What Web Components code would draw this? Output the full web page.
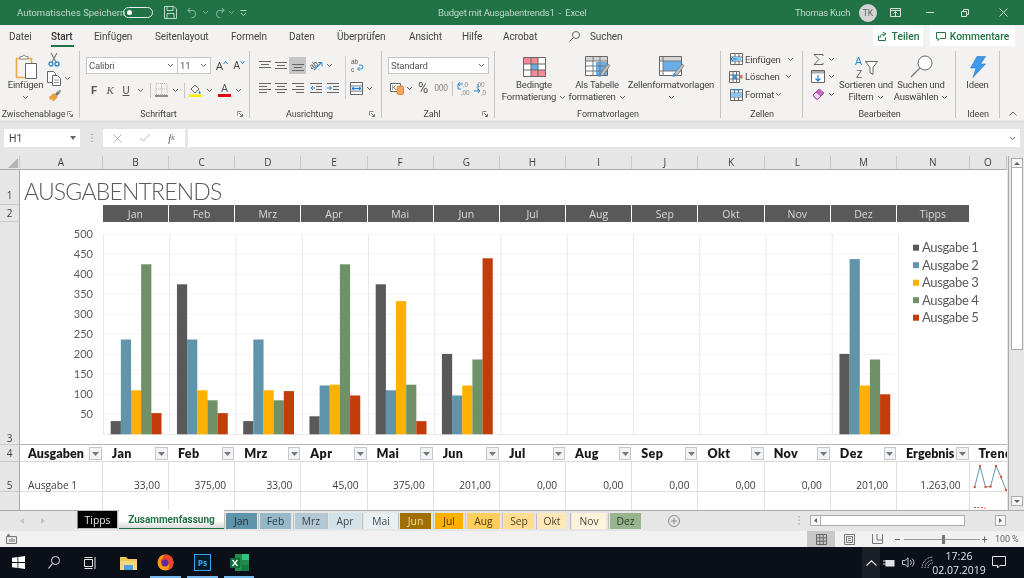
<!DOCTYPE html>
<html lang="de"><head><meta charset="utf-8"><title>Budget mit Ausgabentrends1 - Excel</title>
<style>
html,body{margin:0;padding:0;width:1024px;height:578px;overflow:hidden;background:#e6e6e6}
body{display:flex;flex-direction:column;font-family:Roboto,"Open Sans",sans-serif;filter:blur(.3px)}
</style></head><body>
<xl-titlebar></xl-titlebar>
<xl-tabs></xl-tabs>
<xl-ribbon></xl-ribbon>
<xl-formula></xl-formula>
<xl-sheet></xl-sheet>
<xl-sheettabs></xl-sheettabs>
<xl-status></xl-status>
<xl-taskbar></xl-taskbar>
<script>
const S=(w,h,b,extra='')=>`<svg width="${w}" height="${h}" viewBox="0 0 ${w} ${h}" fill="none" style="overflow:visible" ${extra}>${b}</svg>`;
const L=(c,arr)=>arr.map(a=>`<path d="M${a[0]} ${a[2]+.5}H${a[1]}" stroke="${c}"/>`).join('');
const chev=(c='#666')=>S(7,5,`<path d="M1 1l2.5 2.5L6 1" stroke="${c}"/>`);
const gridIcon=(w,h,body='')=>`<path d="M.5 .5H${w-.5}V${h-.5}H.5z" stroke="#666" fill="#fff"/>`+body;
const LS='font-family="Liberation Sans"';
const I={
 paste:S(22,25,`<path d="M1.5 4.5h15v19h-15z" stroke="#eba94a" stroke-width="1.6" fill="#f7f4ef"/><path d="M5 5V2.5h2.5a1.5 1.5 0 0 1 3 0H13V5z" stroke="#8a8a8a" fill="#fff"/><path d="M10.5 9.5h11v15h-11z" stroke="#666" fill="#fff"/>`),
 cut:S(12,15,`<path d="M3 1l5 9M9 1L4 10" stroke="#777" stroke-width="1.1"/><circle cx="3" cy="12" r="2" stroke="#2f8ad6" stroke-width="1.3"/><circle cx="9" cy="12" r="2" stroke="#2f8ad6" stroke-width="1.3"/>`),
 copy:S(14,15,`<path d="M.5 .5h6l2 2v9H.5z" stroke="#666" fill="#fff"/><path d="M5.5 4.5h5l3 3v7h-8z" stroke="#666" fill="#fff"/><path d="M7 9h5M7 11.500h5" stroke="#999"/>`),
 brush:S(14,13,`<path d="M1 8l5-4 4 4-4 4H4l1-2-3 1z" fill="#e9a13b"/><path d="M7 5l3-3 2 2-3 3z" fill="#777"/><path d="M10 2l2-1.500 1 1.500-1 2z" fill="#999"/>`),
 grow:S(5,3,`<path d="M.5 3L2.500 .5 4.500 3" stroke="#2f8ad6"/>`),
 shrink:S(5,3,`<path d="M.5 0L2.500 2.500 4.500 0" stroke="#2f8ad6"/>`),
 borders:S(13,14,`<path d="M1 .5h11v11H1zM1 6h11M6.500 .5v11" stroke="#bbb" stroke-dasharray="1 1"/><path d="M0 13h13" stroke="#555" stroke-width="1.300"/>`),
 fill:S(14,14,`<path d="M2 6l4-4 4 4-4 4z" stroke="#666" fill="#fff"/><path d="M10 7c1 2 2 2 1.500 3.500s-2.500 .5-1.500-3.500z" fill="#2f8ad6"/><rect y="11.500" width="13" height="2.500" fill="#ffec00"/>`),
 lTop:S(12,10,L('#666',[[0,12,0],[2,10,3],[0,12,6]])),
 lMid:S(12,12,L('#666',[[0,12,2],[2,10,5],[0,12,8]])),
 lBot:S(12,12,L('#666',[[0,12,4],[2,10,7],[0,12,10]])),
 orient:S(14,13,`<g transform="rotate(-35 4 6)"><text x="0" y="9" font-size="8" fill="#555" ${LS}>ab</text></g><path d="M5 11L12 4" stroke="#2f8ad6" stroke-width="1.300"/><path d="M9 3.500h4v4" stroke="#2f8ad6"/>`),
 aL:S(12,11,L('#666',[[0,12,0],[0,8,3],[0,12,6],[0,8,9]])),
 aC:S(12,11,L('#666',[[0,12,0],[2,10,3],[0,12,6],[2,10,9]])),
 aR:S(12,11,L('#666',[[0,12,0],[4,12,3],[0,12,6],[4,12,9]])),
 indL:S(12,11,L('#666',[[0,12,0],[6,12,3],[6,12,6],[0,12,9]])+`<path d="M5 5H.500M3 3L1 5l2 2" stroke="#2f8ad6"/>`),
 indR:S(12,11,L('#666',[[0,12,0],[6,12,3],[6,12,6],[0,12,9]])+`<path d="M0 5h4.500M2.500 3l2 2-2 2" stroke="#2f8ad6"/>`),
 wrap:S(13,15,`<text x="0" y="6" font-size="6.500" fill="#555" ${LS}>ab</text><text x="0" y="13.800" font-size="6.500" fill="#555" ${LS}>c</text><path d="M7 11h3a2 2 0 0 0 0-4H8M8.500 9l-2 2 2 2" stroke="#2f8ad6"/>`),
 merge:S(13,13,`<path d="M.5 .5h12v12H.5zM.5 4h12M.5 9h12" stroke="#666" fill="#fff"/><rect x="1" y="4.500" width="11" height="4" fill="#cfe5f7"/><path d="M2 6.500h9M4 5L2 6.500 4 8M9 5l2 1.500L9 8" stroke="#1f7fd0"/>`),
 cur:S(14,13,`<path d="M.5 1.500h10v8H.5z" stroke="#666" fill="#fff"/><text x="2" y="8" font-size="6.500" fill="#555" ${LS}>K</text><rect x="7" y="4" width="6.500" height="8.500" rx="1.500" fill="#f2a65a" stroke="#d98a3a"/>`),
 d1:S(13,15,`<text x="6" y="6" font-size="6.500" fill="#888" ${LS}>,0</text><text x="4" y="13.800" font-size="6.500" fill="#888" ${LS}>,00</text><path d="M6 3H1M3 1L1 3l2 2M1 3v5h3" stroke="#2f8ad6"/>`),
 d2:S(13,15,`<text x="2" y="6" font-size="6.500" fill="#888" ${LS}>,00</text><text x="7" y="13.800" font-size="6.500" fill="#888" ${LS}>,0</text><path d="M0 10h6M4 8l2 2-2 2M4 3v7" stroke="#2f8ad6"/>`),
 cond:S(23,20,gridIcon(23,20,`<rect x="1" y="1" width="14" height="6" fill="#f58a94"/><rect x="8" y="7" width="7" height="6" fill="#6aaee8"/><rect x="8" y="13" width="14" height="6" fill="#f58a94"/><path d="M8 1v18M15 1v18M1 7h21M1 13h21" stroke="#666"/>`)),
 tbl:S(25,22,`<path d="M.5 .5H22.500V19.500H.5z" stroke="#666" fill="#fff"/><rect x="1" y="1" width="21" height="4" fill="#d5d5d5"/><rect x="11" y="6" width="11" height="13" fill="#6aaee8"/><path d="M8 1v18M15 1v18M1 5h21M1 10h21M1 15h21" stroke="#777"/><path d="M15 18l8-10 2 1.500L18 20z" fill="#bcbcbc" stroke="#666" stroke-width=".6"/><path d="M13 20l2-3 2 2-2 2z" fill="#3f8fd6"/>`),
 sty:S(25,22,`<path d="M.5 .5H22.500V19.500H.5z" stroke="#666" fill="#fff"/><rect x="1" y="1" width="21" height="4" fill="#d5d5d5"/><rect x="4" y="5" width="18" height="10" fill="#6aaee8"/><path d="M1 5h21M4 1v18M1 15h21" stroke="#777"/><path d="M15 18l8-10 2 1.500L18 20z" fill="#bcbcbc" stroke="#666" stroke-width=".6"/><path d="M13 20l2-3 2 2-2 2z" fill="#3f8fd6"/>`),
 cIns:S(13,12,`<path d="M.5 .5h12v11H.5zM.5 4h12M.5 8h12M5 .5v11M9 .5v11" stroke="#666" fill="#fff"/><rect x="3" y="4" width="8" height="4" fill="#8cc4f2"/><path d="M7 6H1M3 4L1 6l2 2" stroke="#1f7fd0"/>`),
 cDel:S(14,12,`<path d="M.5 .5h10v11H.5zM.5 4h10M.5 8h10M4 .5v11M7.500 .5v11" stroke="#666" fill="#fff"/><rect x="4" y="4" width="4" height="4" fill="#3f8fd6"/><path d="M10 4l3.500 3.500M13.500 4L10 7.500" stroke="#e2504a" stroke-width="1.200"/>`),
 cFmt:S(13,13,`<path d="M.5 1.500h12v11H.5zM.5 5h12M.5 9h12M4.500 1.500v11M8.500 1.500v11" stroke="#666" fill="#fff"/><rect x="2" y="1" width="9" height="1.500" fill="#2f8ad6"/><rect x="1" y="5" width="11" height="4" fill="#8cc4f2"/>`),
 sigma:S(11,11,`<path d="M10 2V.5H1L6 5.500 1 10.500h9V9" stroke="#666"/>`),
 fillD:S(14,13,`<path d="M.5 .5h13v12H.5z" stroke="#666" fill="#fff"/><rect x="1" y="1" width="12" height="2.500" fill="#aaa"/><path d="M7 5v6M4.500 8.500L7 11l2.500-2.500" stroke="#1f7fd0" stroke-width="1.200"/>`),
 eraser:S(13,12,`<path d="M1 7l6-6 5 4-6 6H4z" fill="#c86dc0" stroke="#a64fa0"/><path d="M1 7l3-3 5 4-3 3H4z" fill="#f3d6f0" stroke="#a64fa0"/>`),
 sort:S(23,24,`<text x="0" y="10" font-size="10.500" fill="#2f8ad6" ${LS}>A</text><text x="1" y="22.500" font-size="10.500" fill="#666" ${LS}>Z</text><path d="M10.500 6.500h12l-4.500 6v7l-3-2v-5z" stroke="#666" fill="#fff"/>`),
 find:S(23,23,`<circle cx="15" cy="8" r="7" stroke="#666" fill="#fff"/><path d="M10 13L1 22" stroke="#777" stroke-width="1.300"/>`),
 bolt:S(16,22,`<path d="M7 .5h8.500L10.500 8h5L3 21.500 6 12H.5z" fill="#3f9be8" stroke="#1f77c9" stroke-width=".6"/>`),
 launch:S(6,6,`<path d="M.5 .5h4M.5 .5v4" stroke="#888"/><path d="M2 2l3.500 3.500M5.500 3v2.500H3" stroke="#777"/>`)
};
class Base extends HTMLElement{
 connectedCallback(){ if(this.shadowRoot) return; const r=this.attachShadow({mode:'open'}); r.innerHTML=`<style>${this.css()}</style>${this.html()}`; }
 css(){return ''} html(){return ''}
}
customElements.define('xl-titlebar',class extends Base{
 css(){return `:host{display:flex;align-items:center;height:25px;flex:none;background:#217346;color:#bcd7c8;font-size:9.500px;position:relative}
 .c{display:flex;align-items:center;justify-content:center;flex:none}
 .tg{width:29px;height:11px;border:1px solid #e8f1ec;border-radius:7px;box-sizing:border-box;margin-left:5px;display:flex;align-items:center;padding-left:3px;margin-right:11px;width:30px}
 .tg i{width:5px;height:5px;border-radius:50%;background:#fff}
 .av{width:18px;height:18px;border-radius:50%;background:#d4d4d4;color:#666;font-size:8.500px;letter-spacing:0}
 .t{width:148px;margin-left:191px;white-space:pre;font-size:9.500px;letter-spacing:-.25px}`}
 html(){return `<span style="margin-left:17px;width:101px;white-space:nowrap">Automatisches Speichern</span>
 <span class="tg"><i></i></span>
 <span class="c">${S(13,13,`<path d="M.5 .5H10l2.500 2.500V12.500H.5z" stroke="#bcd7c8"/><path d="M3 .5v4h6v-4M3 12.500V7.500h7v5" stroke="#bcd7c8"/>`)}</span>
 <span class="c" style="margin-left:10px">${S(12,11,`<path d="M3 1L1 3.500 3.500 5.500M1.500 3.500h5a4 4 0 0 1 0 7h-2" stroke="#7fae95" stroke-width="1.200"/>`)}</span>
 <span class="c" style="margin-left:3px">${chev('#7fae95')}</span>
 <span class="c" style="margin-left:4px">${S(12,11,`<path d="M9 1l2 2.500L8.500 5.500M10.500 3.500h-5a4 4 0 0 0 0 7h2" stroke="#7fae95" stroke-width="1.200"/>`)}</span>
 <span class="c" style="margin-left:3px">${chev('#7fae95')}</span>
 <span class="c" style="margin-left:5px">${S(7,6,`<path d="M.5 .5h6M1 3l2.500 2.500L6 3" stroke="#bcd7c8"/>`)}</span>
 <span class="t">Budget mit Ausgabentrends1  -  Excel</span>
 <span style="margin-left:209px;width:55px;white-space:nowrap;font-size:9.500px;letter-spacing:-.3px">Thomas Kuch</span>
 <span class="c av" style="margin-left:9px">TK</span>
 <span class="c" style="margin-left:13px">${S(11,9,`<path d="M.5 .5h10v8H.5zM.5 2.500h10M5.500 4v4M3.500 5.500L5.500 3.500l2 2" stroke="#d5e5dc"/>`)}</span>
 <span class="c" style="margin-left:25px">${S(8,1,`<path d="M0 .5h8" stroke="#d5e5dc"/>`)}</span>
 <span class="c" style="margin-left:27px">${S(8,8,`<path d="M.5 2.500h5v5h-5zM2.500 2V.5h5v5H6" stroke="#d5e5dc"/>`)}</span>
 <span class="c" style="margin-left:30px">${S(9,9,`<path d="M.5 .5l8 8M8.500 .5l-8 8" stroke="#d5e5dc"/>`)}</span>`}
});
customElements.define('xl-tabs',class extends Base{
 css(){return `:host{display:flex;height:23px;flex:none;background:#f3f2f1;color:#444;font-size:10px;letter-spacing:-.1px;align-items:center}
 span{flex:none;white-space:nowrap;line-height:23px;height:23px}
 .a{font-weight:500;color:#333;position:relative;box-sizing:border-box}
 .a i{position:absolute;left:0;right:0;top:20px;height:1.500px;background:#217346}
 .b{height:20px;line-height:19px;background:#fff;color:#217346;font-weight:500;display:flex;align-items:center;justify-content:center;gap:4px;margin-top:-1px;font-size:10.300px;letter-spacing:0}`}
 html(){const t=[['Datei',9,23],['Start',51,23],['Einfügen',94,38],['Seitenlayout',155,54],['Formeln',231,36],['Daten',289,26],['Überprüfen',337,51],['Ansicht',409,32],['Hilfe',462,20],['Acrobat',503,36]];
 let x=0,o='';for(const[n,l,w]of t){o+=`<span class="${n=='Start'?'a':''}" style="margin-left:${l-x}px;width:${w}px">${n}${n=='Start'?'<i></i>':''}</span>`;x=l+w}
 return o+`<span style="margin-left:30px;width:11px;display:flex;align-items:center">${S(11,11,`<circle cx="7" cy="4" r="3.500" stroke="#666"/><path d="M4.500 6.500L.5 10.500" stroke="#666"/>`)}</span>
 <span style="margin-left:10px;width:283px">Suchen</span>
 <span class="b" style="width:50px">${S(11,10,`<path d="M1.500 4.500v5h7v-3M3 7c0-3 2-4 4.500-4M6 1l3 2-3 2" stroke="#217346"/>`)}Teilen</span>
 <span class="b" style="width:85px;margin-left:7px">${S(10,9,`<path d="M.5 .5h9v6H4L2 8.500v-2H.5z" stroke="#217346"/>`)}Kommentare</span>`}
});
const cell=(w,c,cls='',st='')=>`<span class="c ${cls}" style="width:${w}px;${st}">${c}</span>`;
const big=(w,ic,lines,st='')=>`<div class="big" style="width:${w}px;${st}"><div class="ic">${ic}</div>${lines.map(l=>`<div class="ln">${l}</div>`).join('')}</div>`;
customElements.define('xl-group',class extends Base{
 css(){return `:host{display:flex;flex-direction:column;flex:none;height:73px;box-sizing:border-box;position:relative}
 :host::after{content:"";position:absolute;right:0;top:3px;bottom:3px;width:1px;background:#c8c6c4}
 .b{height:60px;flex:none;display:flex}
 .l{display:flex;height:12px;align-items:center;font-size:9px;letter-spacing:-.1px;color:#444;white-space:nowrap}
 .l b{font-weight:400;flex:1;text-align:center;line-height:12px}
 .l i{width:13px;flex:none;display:flex;align-items:center}`}
 html(){const la=this.getAttribute('launch')!=null;return `<div class="b"><slot></slot></div><div class="l"><b>${this.getAttribute('label')}</b>${la?`<i>${I.launch}</i>`:''}</div>`}
});
customElements.define('xl-ribbon',class extends Base{
 css(){return `:host{display:block;flex:none;height:76px;background:linear-gradient(#f3f2f1 72px,#dcdcdc 73px,#e6e6e6 76px);font-size:9.500px;letter-spacing:-.2px;color:#444}
 .w{display:flex;height:73px;position:relative}
 .c{display:inline-flex;align-items:center;justify-content:center;flex:none;white-space:nowrap}
 .col{display:flex;flex-direction:column;flex:none}
 .row{display:flex;align-items:center;flex:none}
 .big{display:flex;flex-direction:column;align-items:center;flex:none;padding-top:6px;box-sizing:border-box}
 .ic{height:25px;display:flex;align-items:center;justify-content:center;flex:none}
 .ln{height:12px;line-height:12px;white-space:nowrap;flex:none;display:flex;align-items:center;gap:3px}
 .box{background:#fff;border:1px solid #c8c6c4;height:17px;box-sizing:border-box;display:flex;align-items:center;justify-content:space-between;padding:0 3px 0 2px;flex:none;font-size:9.500px;color:#555}
 .sep{width:1px;background:#c8c6c4;height:15px;display:block}
 .sel{background:#c6c6c6;height:17px}
 .s3{height:17.500px}
 .tx{font-size:11px;color:#555}
 .end{flex:1;display:flex;align-items:flex-end;justify-content:flex-end;padding:0 7px 5px 0}`}
 html(){return `<div class="w">
 <xl-group label="Zwischenablage" launch style="width:80px">
  ${big(47,I.paste,['Einfügen',chev()],'margin-left:2px')}
  <div class="col" style="padding-top:3px">
   <div class="row s3">${cell(12,I.cut,'','margin-left:-1px')}</div>
   <div class="row s3" style="margin-top:1px">${cell(14,I.copy,'','margin-left:-2px')}${cell(12,chev())}</div>
   <div class="row s3" style="margin-top:0">${cell(13,I.brush,'','margin-left:-1px')}</div>
  </div>
 </xl-group>
 <xl-group label="Schriftart" launch style="width:170px">
  <div class="col" style="padding:9px 0 0 6px">
   <div class="row" style="height:17px"><div class="box" style="width:92px"><span>Calibri</span>${chev()}</div><div class="box" style="width:33px;border-left:0"><span>11</span>${chev()}</div>
    ${cell(19,`<span style="font-size:11.500px;margin-left:3px">A</span><span style="margin-bottom:6px;display:flex">${I.grow}</span>`)}${cell(16,`<span style="font-size:10.500px;margin-left:2px">A</span><span style="margin-bottom:6px;display:flex">${I.shrink}</span>`)}</div>
   <div class="row" style="height:16px;margin-top:8px">
    ${cell(16,'<b>F</b>','tx')}${cell(16,'<i style="font-family:\'Liberation Serif\'">K</i>','tx')}${cell(16,'<u>U</u>','tx')}${cell(12,chev())}${cell(8,'<i class="sep"></i>')}${cell(15,I.borders)}${cell(12,chev())}${cell(6,'<i class="sep"></i>')}${cell(17,I.fill)}${cell(10,chev())}
    ${cell(21,`<span style="display:flex;flex-direction:column;align-items:center;width:13px"><span style="font-size:11px;line-height:11px;color:#555">A</span><span style="display:block;width:13px;height:3px;background:#e3000f"></span></span>`)}${cell(6,chev())}
   </div>
  </div>
 </xl-group>
 <xl-group label="Ausrichtung" launch style="width:132px">
  <div class="col" style="padding:9px 0 0 6px;width:89px">
   <div class="row" style="height:17px">${cell(17,I.lTop)}${cell(16,I.lMid)}${cell(17,I.lBot,'sel')}${cell(19,I.orient)}${cell(8,chev())}</div>
   <div class="row" style="height:16px;margin-top:6px">${cell(17,I.aL)}${cell(16,I.aC)}${cell(17,I.aR)}${cell(19,I.indL)}${cell(16,I.indR)}</div>
  </div>
  <div style="width:1px;background:#d0cecc;height:43px;margin-top:8px;flex:none"></div>
  <div class="col" style="padding-top:9px">
   <div class="row" style="height:17px">${cell(22,I.wrap)}</div>
   <div class="row" style="height:16px;margin-top:6px">${cell(20,I.merge)}${cell(6,chev())}</div>
  </div>
 </xl-group>
 <xl-group label="Zahl" launch style="width:113px">
  <div class="col" style="padding:9px 0 0 6px">
   <div class="row" style="height:17px"><div class="box" style="width:101px"><span>Standard</span>${chev()}</div></div>
   <div class="row" style="height:16px;margin-top:6px">${cell(17,I.cur)}${cell(8,chev())}${cell(20,'<span style="font-size:14px;color:#555">%</span>')}${cell(16,'<span style="font-size:8.500px;color:#888">000</span>')}${cell(6,'<i class="sep"></i>')}${cell(17,I.d1)}${cell(17,I.d2)}</div>
  </div>
 </xl-group>
 <xl-group label="Formatvorlagen" style="width:226px">
  ${big(74,I.cond,['Bedingte','Formatierung '+chev()],'margin-left:2px')}
  ${big(52,I.tbl,['Als Tabelle','formatieren '+chev()])}
  ${big(96,I.sty,['Zellenformatvorlagen',chev()])}
 </xl-group>
 <xl-group label="Zellen" style="width:82px">
  <div class="col" style="padding:2.500px 0 0 8px">
   <div class="row s3">${cell(14,I.cIns)}<span style="margin-left:2px;width:40px">Einfügen</span>${cell(10,chev())}</div>
   <div class="row s3">${cell(14,I.cDel)}<span style="margin-left:2px;width:38px">Löschen</span>${cell(10,chev())}</div>
   <div class="row s3">${cell(14,I.cFmt)}<span style="margin-left:2px;width:28px">Format</span>${cell(10,chev())}</div>
  </div>
 </xl-group>
 <xl-group label="Bearbeiten" style="width:153px">
  <div class="col" style="padding:2.500px 0 0 7px">
   <div class="row s3">${cell(16,I.sigma)}${cell(10,chev())}</div>
   <div class="row s3">${cell(16,I.fillD)}${cell(10,chev())}</div>
   <div class="row s3">${cell(16,I.eraser)}${cell(10,chev())}</div>
  </div>
  ${big(60,I.sort,['Sortieren und','Filtern '+chev()])}
  ${big(50,I.find,['Suchen und','Auswählen '+chev()])}
 </xl-group>
 <xl-group label="Ideen" style="width:44px">${big(43,I.bolt,['Ideen'])}</xl-group>
 <div class="end">${S(8,5,`<path d="M.5 4.500L4 1l3.500 3.500" stroke="#666"/>`)}</div>
 </div>`}
});
customElements.define('xl-formula',class extends Base{
 css(){return `:host{display:flex;align-items:flex-start;height:32px;flex:none;background:#e6e6e6;padding-top:5px;box-sizing:border-box;font-size:10.500px;color:#444}
 .n,.f,.i{background:#fff;height:18px;display:flex;align-items:center;box-sizing:border-box;flex:none}
 .n{margin-left:4px;width:76px;justify-content:space-between;padding:0 4px 0 5px}
 .d{width:23px;display:flex;justify-content:center;height:18px;align-items:center;flex:none}
 .f{width:82px}
 .f span{display:flex;justify-content:center;width:27px}
 .i{margin-left:3px;width:832px;justify-content:flex-end;padding-right:4px}`}
 html(){return `<div class="n"><span>H1</span>${S(6,4,`<path d="M0 0h6L3 4z" fill="#666"/>`)}</div>
 <div class="d">${S(2,10,`<path d="M1 1v1M1 4.500v1M1 8v1" stroke="#999" stroke-width="1.500"/>`)}</div>
 <div class="f"><span style="margin-left:1px">${S(9,9,`<path d="M.5 .5l8 8M8.500 .5l-8 8" stroke="#b8b8b8"/>`)}</span><span>${S(10,8,`<path d="M.5 4l3 3L9.500 .5" stroke="#b8b8b8"/>`)}</span><span style="font-family:'Liberation Serif';font-style:italic;color:#555">f<small style="font-size:7.500px">x</small></span></div>
 <div class="i">${chev()}</div>`}
});
const cols=['A','B','C','D','E','F','G','H','I','J','K','L','M','N','O'];
const months=['Jan','Feb','Mrz','Apr','Mai','Jun','Jul','Aug','Sep','Okt','Nov','Dez'];
customElements.define('xl-chart',class extends Base{
 css(){return `:host{display:block;width:988px;height:223px}svg{display:block}text{font-family:Lato,sans-serif;fill:#595959}`}
 html(){
  const data={0:[33,237,110,425,53],1:[375,237,110,85,53],2:[33,237,110,85,108],3:[45,122,124,425,97],4:[375,110,333,124,33],5:[201,97,122,187,440],11:[201,438,122,187,100]};
  const col=['#595959','#5f94ab','#ffb000','#6f9167','#c33d0b'];
  let o='';
  for(let v=50;v<=500;v+=50){const y=434.3-v*.4;o+=`<path d="M103 ${y}H898" stroke="#f3f3f3"/><text x="93" y="${y+3.800}" text-anchor="end" font-size="11">${v}</text>`}
  o+=`<path d="M103 434.500H898" stroke="#ececec"/>`;
  for(let i=0;i<=12;i++){const x=103.5+i*66.25;o+=`<path d="M${x} 234V434.500" stroke="#e9e9e9"/>`}
  for(const k in data){data[k].forEach((v,j)=>{const x=110.7+k*66.25+j*10.15;const h=v*.4;o+=`<rect x="${x}" y="${434.300-h}" width="10.200" height="${h}" fill="${col[j]}"/>`})}
  col.forEach((c,j)=>{const y=247.7+j*17.5;o+=`<rect x="913" y="${y-3}" width="6" height="6" fill="${c}"/><text x="922" y="${y+4.500}" font-size="13" letter-spacing="-.35">Ausgabe ${j+1}</text>`});
  return `<svg width="988" height="223" viewBox="20 222 988 223">${o}</svg>`}
});
customElements.define('xl-sheet',class extends Base{
 css(){return `:host{display:flex;flex:none;height:354px;background:#e6e6e6;position:relative}
 .g{display:grid;grid-template-columns:20px 82.800px repeat(12,66.200px) 72.500px 37.500px;grid-template-rows:14px 35px 17px 223px 17px 30px 18px;width:1008px;flex:none;font-size:10px;color:#444;overflow:hidden;border-right:0;font-family:"Open Sans",sans-serif}
 .g>div{box-sizing:border-box;min-width:0}
 .ch{background:#e6e6e6;border-right:1px solid #c9c9c9;border-bottom:1px solid #ababab;display:flex;align-items:center;justify-content:center;font-size:10px;color:#3f3f3f;line-height:13px}
 .ch:last-of-type{border-right:0;justify-content:flex-end;padding-right:0}
 .rh{background:#e6e6e6;border-right:1px solid #ababab;border-bottom:1px solid #c9c9c9;display:flex;justify-content:center;align-items:flex-end;line-height:12px;font-size:10px;color:#3f3f3f}
 .w{background:#fff}
 .t{background:#fff;grid-column:2/span 15;display:flex;align-items:flex-end;white-space:nowrap;font:300 23px/28px Lato,sans-serif;color:#595959;padding:0 0 0 4px;letter-spacing:-.8px}
 .m{background:#fff;padding-right:1px}
 .m span{display:flex;height:100%;align-items:center;justify-content:center;background:#595959;color:#d9d9d9;font-size:10.500px;border-top:0}
 .ct{grid-column:2/span 15;background:#fff;border-bottom:1px solid #b5b5b5}
 .h{background:#fff;border-bottom:1px solid #d9d9d9;display:flex;align-items:center;justify-content:space-between;padding:2px 1px 0 9px;font:800 12.500px/14px Lato,sans-serif;color:#1a1a1a;letter-spacing:.35px;white-space:nowrap;overflow:hidden}
 .h i{width:12.500px;height:13px;box-sizing:border-box;border:1px solid #c3c6cc;background:#f2f3f6;display:flex;align-items:center;justify-content:center;flex:none;margin-left:2px;margin-top:-1px}
 .b{background:#fff;border-right:1px solid #e0e0e0;border-bottom:1px solid #e0e0e0;display:flex;align-items:flex-end;justify-content:flex-end;padding:0 8px 0 0;color:#404040;font-size:10.200px;line-height:12px;white-space:nowrap}
 .b.l{justify-content:flex-start;padding-left:8px}
 .o{border-right:0;padding:0;overflow:hidden;display:block}
 .sb{width:16px;flex:none;background:#e6e6e6;border-left:1px solid #ababab;box-sizing:border-box;display:flex;flex-direction:column;align-items:center;padding:2px 0 0 1px}
 .sb b{display:flex;width:12px;height:10px;flex:none;align-items:center;justify-content:center;background:#f6f6f6;border:1px solid #ababab;box-sizing:border-box}
 .sb u{display:block;width:12px;height:182px;background:#fff;border:1px solid #ababab;box-sizing:border-box;flex:none;border-top:0}
 .sb s{flex:1}
 .sb b:last-child{margin-bottom:4px}`}
 html(){
  const tri=`${S(7,4,'<path d="M0 0h7L3.500 4z" fill="#777"/>')}`;
  let o=`<div class="ch" style="align-items:flex-end;justify-content:flex-end;padding:0 1px 1px 0">${S(10,10,'<path d="M10 0v10H0z" fill="#b3b3b3"/>')}</div>`;
  cols.forEach(c=>o+=`<div class="ch">${c}</div>`);
  const all=[...months,'Tipps'];
  o+=`<div class="rh" style="padding-bottom:3px">1</div><div class="t">AUSGABENTRENDS</div>`;
  o+=`<div class="rh" style="align-items:center">2</div><div class="w"></div>`+all.map(m=>`<div class="m"><span>${m}</span></div>`).join('')+`<div class="w"></div>`;
  o+=`<div class="rh">3</div><div class="ct"><xl-chart></xl-chart></div>`;
  o+=`<div class="rh" style="align-items:center">4</div>`;
  ['Ausgaben',...months,'Ergebnis'].forEach((m,i)=>{const st=m=='Ergebnis'?' style="letter-spacing:0"':(m=='Ausgaben'?' style="padding-left:8px;letter-spacing:.05px"':'');o+=`<div class="h"${st}><span>${m}</span><i>${tri}</i></div>`});
  o+=`<div class="h"><span>Trend</span></div>`;
  o+=`<div class="rh">5</div><div class="b l">Ausgabe 1</div>`;
  ['33,00','375,00','33,00','45,00','375,00','201,00','0,00','0,00','0,00','0,00','0,00','201,00','1.263,00'].forEach(v=>o+=`<div class="b">${v}</div>`);
  const pts=[[4.7,25],[10,4],[15.500,25],[20.500,24.500],[26,4],[31,15],[36,28]];
  o+=`<div class="b o">${S(37,30,`<polyline points="${pts.map(p=>p.join(',')).join(' ')}" stroke="#5f94ab" stroke-width="1"/>`+pts.map(p=>`<circle cx="${p[0]}" cy="${p[1]}" r="1.200" fill="#d9533a"/>`).join(''))}</div>`;
  o+=`<div class="rh" style="border-bottom:0"></div>`+Array.from({length:14},()=>`<div class="b" style="border-bottom:0"></div>`).join('');
  o+=`<div class="b o" style="border-bottom:0">${S(37,18,`<path d="M4 15.500H14.500L16 18" stroke="#d9533a" stroke-dasharray="2 1.500"/>`)}</div>`;
  return `<div class="g">${o}</div>
  <div class="sb"><b>${S(6,3,'<path d="M0 3h6L3 0z" fill="#666"/>')}</b><u></u><s></s><b>${S(6,3,'<path d="M0 0h6L3 3z" fill="#666"/>')}</b></div>`}
});
customElements.define('xl-sheettabs',class extends Base{
 css(){return `:host{display:flex;height:21px;flex:none;background:#e6e6e6;border-top:1px solid #ababab;box-sizing:border-box;font:10.300px "Open Sans",sans-serif;position:relative}
 .t{flex:none;height:16px;margin-top:2px;display:flex;align-items:center;justify-content:center;white-space:nowrap;box-sizing:border-box;position:relative}
 .t+.t::before{content:"";position:absolute;left:-2px;top:0;bottom:0;width:1px;background:#c0c0c0}
 .z{height:19px;margin-top:-1px;background:linear-gradient(#fff 60%,#d8d8d8);color:#217346;font:700 10px Roboto,sans-serif;border-bottom:1.500px solid #217346}
 .k{height:19px;margin-top:-1px;background:#000;color:#e8e8e8;border:1px solid #bdbdbd;border-left:1px solid #888}
 .n{flex:none;display:flex;align-items:center;height:19px}
 .hs{display:flex;align-items:center;flex:none;height:14px;margin-top:2px}
 .hs b{display:flex;align-items:center;justify-content:center;width:11px;height:11px;background:#f6f6f6;border:1px solid #ababab;box-sizing:border-box;flex:none}
 .hs u{display:block;width:144px;height:11px;background:#fff;border:1px solid #ababab;border-left:0;box-sizing:border-box;flex:none}
 .hs s{display:block;width:30px;height:11px;flex:none}`}
 html(){const t=[['Tipps',77,41,'#000','#fff','k'],['Zusammenfassung',119,105,'','','z'],['Jan',226,31,'#5f94ab','#24323a'],['Feb',260,31,'#96b9ca','#2b3a42'],['Mrz',295,32,'#b3c8d4','#3a444a'],['Apr',329,32,'#d3e2e9','#40484d'],['Mai',364,34,'#e9f0f4','#40484d'],['Jun',400,31,'#a06f00','#ecd9b0'],['Jul',435,28,'#ffb000','#4a3500'],['Aug',467,33,'#ffce5b','#4a3a10'],['Sep',504,30,'#ffde94','#4a3f20'],['Okt',538,28,'#ffe8b7','#4a4230'],['Nov',572,34,'#fff3dc','#4a4640'],['Dez',610,31,'#98b58f','#2b3a28']];
 let x=0,o=`<span class="n" style="margin-left:20px">${S(4,6,'<path d="M4 0v6L0 3z" fill="#c4c4c4"/>')}</span><span class="n" style="margin-left:17px">${S(4,6,'<path d="M0 0v6l4-3z" fill="#c4c4c4"/>')}</span>`;x=45;
 for(const[n,l,w,bg,fg,c]of t){o+=`<span class="t ${c||''}" style="margin-left:${l-x}px;width:${w}px;${bg&&c!='k'?`background:${bg};color:${fg}`:''}">${n}</span>`;x=l+w}
 return o+`<span class="n" style="margin-left:27px">${S(12,12,'<circle cx="6" cy="6" r="5.500" stroke="#8a8a8a"/><path d="M6 3v6M3 6h6" stroke="#8a8a8a"/>')}</span>
 <span class="n" style="margin-left:118px">${S(2,9,'<path d="M1 0v1.500M1 3.500V5M1 7v1.500" stroke="#a6a6a6" stroke-width="1.200"/>')}</span>
 <span class="hs" style="margin-left:10px"><b>${S(3,5,'<path d="M3 0v5L0 2.500z" fill="#666"/>')}</b><u></u><s></s><b>${S(3,5,'<path d="M0 0v5l3-2.500z" fill="#666"/>')}</b></span>`}
});
customElements.define('xl-status',class extends Base{
 css(){return `:host{display:flex;align-items:center;height:16px;flex:none;background:#f1f1f1;font-size:9.500px;color:#666}
 .v{width:28px;height:16px;display:flex;align-items:center;justify-content:center;flex:none}
 .s{background:#c8c8c8}
 .sl{width:76px;height:1px;background:#9a9a9a;position:relative;flex:none;display:flex;align-items:center;justify-content:center}
 .sl i{width:3px;height:9px;background:#777;margin-left:3px;display:block}`}
 html(){return `<span style="margin-left:6px;display:flex;flex:none">${S(11,10,'<path d="M.5 2.500h10v7H.5z" stroke="#777" fill="#e8e8e8"/><circle cx="2.500" cy="1.500" r="1.500" fill="#777"/><path d="M4 8V5M6 8V4M8 8V5" stroke="#777"/>')}</span>
 <span class="v s" style="margin-left:790px">${S(11,11,'<path d="M.5 .5h10v10H.5zM.5 3.800h10M.5 7.200h10M3.800 .5v10M7.200 .5v10" stroke="#666"/>')}</span>
 <span class="v">${S(11,11,'<path d="M.5 .5h10v10H.5z" stroke="#777"/><path d="M2.500 2.500h6v6h-6zM4 4.500h3M4 6.500h3" stroke="#777"/>')}</span>
 <span class="v">${S(11,10,'<path d="M.5 0v9.500h10V0M5 0v6h5" stroke="#777"/>')}</span>
 <span style="width:5px;height:1px;background:#666;margin-left:4px;flex:none"></span>
 <span class="sl" style="margin-left:4px"><i></i></span>
 <span style="margin-left:0;flex:none;color:#666;font-size:11px;line-height:11px;width:9px;text-align:center">+</span>
 <span style="margin-left:6px;flex:none;white-space:nowrap;font-size:9px;letter-spacing:-.1px">100 %</span>`}
});
customElements.define('xl-taskbar',class extends Base{
 css(){return `:host{display:flex;align-items:center;height:31px;flex:none;background:#0a0f18;color:#dfe3e8;position:relative;font:10.500px "Open Sans",sans-serif}
 .i{display:flex;align-items:center;justify-content:center;flex:none;height:31px;position:relative;width:36px}
 .on::after{content:"";position:absolute;left:3px;right:3px;bottom:0;height:2px;background:#76b9ed}
 .up{background:#1b2027;width:18px}
 .clk{display:flex;flex-direction:column;align-items:center;flex:none;width:44px;line-height:14px}`}
 html(){return `<span class="i">${S(13,13,'<path d="M0 1.800L5.500 1v5H0zM6.300 .9L13 0v6H6.300zM0 7h5.500v5L0 11.200zM6.300 7H13v6l-6.700-.9z" fill="#fff"/>')}</span>
 <span class="i">${S(12,13,'<circle cx="7.500" cy="4.500" r="4" stroke="#e6e6e6"/><path d="M4.500 7.500L.5 12.500" stroke="#e6e6e6" stroke-width="1.200"/>')}</span>
 <span class="i">${S(13,12,'<path d="M.5 2.500h8v7h-8zM.5 .5h8M.5 11.500h8M11 0v12" stroke="#e6e6e6"/>')}</span>
 <span class="i" style="width:37px;margin-left:2px">${S(17,14,'<path d="M0 1h6l2 2h9v11H0z" fill="#f2c75c"/><path d="M0 5h17v9H0z" fill="#f6d77f"/><rect x="4" y="9" width="9" height="5" fill="#4da3dd"/>')}</span>
 <span class="i on" style="width:37px">${S(17,17,'<circle cx="8.500" cy="8.500" r="8" fill="#ff9a1f"/><path d="M8.500 .5a8 8 0 0 1 8 8 8 8 0 0 1-6 7.700C13 13 13 9 9 8 6 7.500 5 9 6 10 3 9 3 5 6 4 6 2 7 1 8.500 .5z" fill="#e8452c"/><circle cx="8" cy="9" r="3.500" fill="#5b2a9e"/>')}</span>
 <span class="i on" style="width:37px"><span style="display:flex;align-items:center;justify-content:center;width:17px;height:17px;background:#001d26;border:1.500px solid #31a8ff;box-sizing:border-box;color:#31a8ff;font:700 8.500px 'Open Sans'">Ps</span></span>
 <span class="i on">${S(19,17,'<rect x="5" y="0" width="14" height="17" fill="#1f8a4c"/><rect x="12" y="0" width="7" height="6" fill="#33c481"/><rect x="12" y="11" width="7" height="6" fill="#107c41"/><rect x="0" y="4" width="10" height="10" fill="#0f6b38"/><path d="M2.500 6l5 6M7.500 6l-5 6" stroke="#fff" stroke-width="1.300"/>')}</span>
 <span class="i up" style="margin-left:605px">${S(11,6,'<path d="M.5 5.500L5.500 .8l5 4.700" stroke="#e6e6e6" stroke-width="1.100"/>')}</span>
 <span class="i" style="width:18px">${S(12,10,'<rect x="2.500" y="2" width="9" height="6.500" fill="#dfe3e8"/><path d="M0 3h3M0 6h3" stroke="#dfe3e8"/>')}</span>
 <span class="i" style="width:19px">${S(12,11,'<path d="M.5 3.500h2.500L6 .8v9.400L3 7.500H.5z" stroke="#c4c8cd"/><path d="M8 3a3 3 0 0 1 0 5M10 1.500a5 5 0 0 1 0 8" stroke="#c4c8cd"/>')}</span>
 <span class="i" style="width:20px">${S(11,11,'<path d="M0 11C0 5 5 0 11 0M3 11C3 7 7 3 11 3M6 11c0-3 2-5 5-5" stroke="#c4c8cd" stroke-dasharray="1 .7"/>')}</span>
 <span class="clk"><span>17:26</span><span>02.07.2019</span></span>
 <span class="i" style="width:16px;margin-left:10px">${S(14,13,'<path d="M.5 .5h13v9H8L5.500 12V9.500H.5z" stroke="#e6e6e6"/>')}</span>`}
});
</script>
</body></html>
